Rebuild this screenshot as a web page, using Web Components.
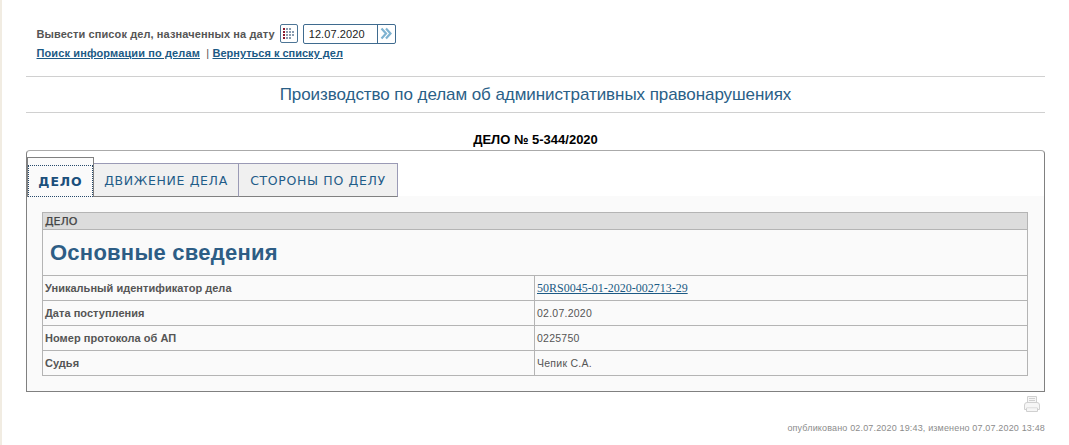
<!DOCTYPE html>
<html lang="ru">
<head>
<meta charset="utf-8">
<title>Дело</title>
<style>
  body { margin: 0; background: #fff; font-family: "Liberation Sans", Arial, sans-serif; }
</style>
</head>
<body>
<case-page></case-page>

<script>
// Строка выбора даты и ссылки над заголовком
class DateBar extends HTMLElement {
  constructor () {
    super()
    this.attachShadow({ mode: 'open' })
  }

  connectedCallback () {
    this.shadowRoot.innerHTML = /* HTML */`
      <style>
        :host { display: block; padding: 24px 0 0 10.5px; font-size: 11px; color: #555; }
        .row { display: flex; align-items: center; height: 19px; }
        .label { font-weight: bold; letter-spacing: .1px; }
        .cal { width: 16px; height: 17px; margin-left: 5px; border: 1px solid #4d7596; border-radius: 2px; display: flex; align-items: center; justify-content: center; }
        .input { display: flex; margin-left: 5px; width: 91px; height: 18px; border: 1px solid #3f6b8f; border-radius: 2px; box-sizing: content-box; }
        .value { flex: 1; padding-left: 5px; color: #222; line-height: 18px; font-size: 11px; letter-spacing: .1px; }
        .go { width: 17px; border-left: 1px solid #3f6b8f; display: flex; align-items: center; justify-content: center; }
        .links { margin-top: 3px; font-weight: bold; line-height: 14px; letter-spacing: .12px; }
        a { color: #1c5a85; text-decoration: underline; }
        .sep { color: #555; font-weight: normal; }
        .back { letter-spacing: 0; }
      </style>
      <div class="row">
        <span class="label">Вывести список дел, назначенных на дату</span>
        <span class="cal">
          <svg width="13" height="14" viewBox="0 0 13 14">
            <g fill="#8a1c30"><rect x="1" y="1" width="2" height="2"/><rect x="1" y="4" width="2" height="2"/><rect x="1" y="7" width="2" height="2"/><rect x="1" y="10" width="2" height="2"/></g>
            <g fill="#8a9cb0"><rect x="4" y="1" width="2" height="2"/><rect x="7" y="1" width="2" height="2"/><rect x="4" y="4" width="2" height="2"/><rect x="7" y="4" width="2" height="2"/><rect x="10" y="4" width="2" height="2"/><rect x="4" y="7" width="2" height="2"/><rect x="7" y="7" width="2" height="2"/><rect x="10" y="7" width="2" height="2"/><rect x="4" y="10" width="2" height="2"/><rect x="7" y="10" width="2" height="2"/></g>
          </svg>
        </span>
        <span class="input">
          <span class="value">12.07.2020</span>
          <span class="go">
            <svg width="12" height="13" viewBox="0 0 12 13" fill="none" stroke="#7fb3d1" stroke-width="2.200">
              <path d="M1.500 1.500 6 6.500l-4.500 5M6 1.500 10.500 6.500 6 11.500"/>
            </svg>
          </span>
        </span>
      </div>
      <div class="links"><a href="#">Поиск информации по делам</a> <span class="sep">&nbsp;|</span> <a class="back" href="#">Вернуться к списку дел</a></div>
    `
  }
}

customElements.define('date-bar', DateBar)

// Вкладки дела
class CaseTabs extends HTMLElement {
  constructor () {
    super()
    this.attachShadow({ mode: 'open' })
  }

  connectedCallback () {
    this.shadowRoot.innerHTML = /* HTML */`
      <style>
        :host { display: flex; align-items: flex-end; height: 40px; font-family: "DejaVu Sans", sans-serif; font-size: 12.5px; letter-spacing: .65px; color: #1f5c88; }
        div { box-sizing: border-box; height: 34px; line-height: 33px; background: #f0f0f0; border: 1px solid #9a9ab5; border-left: 0; border-bottom-color: #808080; text-align: center; }
        .on { position: relative; width: 67px; height: 40px; line-height: 48px; background: #fafafa; font-weight: bold; color: #1b4f7c; border: 1px solid #808080; border-bottom: 0; letter-spacing: .9px; }
        .on::after { content: ''; position: absolute; left: 0; right: 0; top: 7px; bottom: 0; border: 1px dotted #26496b; }
        .b { width: 145px; }
        .c { width: 159px; }
      </style>
      <div class="on">ДЕЛО</div>
      <div class="b">ДВИЖЕНИЕ ДЕЛА</div>
      <div class="c">СТОРОНЫ ПО ДЕЛУ</div>
    `
  }
}

customElements.define('case-tabs', CaseTabs)

// Таблица со сведениями
class CaseTable extends HTMLElement {
  constructor () {
    super()
    this.attachShadow({ mode: 'open' })
  }

  connectedCallback () {
    const rows = [
      ['Уникальный идентификатор дела', '<a href="#">50RS0045-01-2020-002713-29</a>'],
      ['Дата поступления', '02.07.2020'],
      ['Номер протокола об АП', '0225750'],
      ['Судья', 'Чепик С.А.']
    ]
    this.shadowRoot.innerHTML = /* HTML */`
      <style>
        :host { display: block; font-size: 11px; color: #555; }
        .box { border: 1px solid #b4b4b4; border-top: 0; }
        .head { height: 18px; box-sizing: border-box; border-top: 1px solid #b4b4b4; border-bottom: 1px solid #b4b4b4; background: #dcdcdc; padding-left: 2px; line-height: 17px; font-family: "DejaVu Sans", sans-serif; font-size: 11px; color: #444; -webkit-text-stroke: .25px #444; }
        h2 { margin: 0; height: 45px; box-sizing: border-box; padding-left: 7px; line-height: 45px; font-size: 22px; letter-spacing: .25px; color: #2d5d85; font-weight: bold; }
        .row { display: grid; grid-template-columns: 491px 1fr; height: 25px; box-sizing: border-box; border-top: 1px solid #b4b4b4; line-height: 25px; }
        .row > div:first-child { font-weight: bold; padding-left: 2px; letter-spacing: .03px; }
        .row > div:last-child { border-left: 1px solid #b4b4b4; padding-left: 2px; font-size: 10.5px; letter-spacing: .25px; line-height: 24px; }
        a { font-family: "Liberation Serif", serif; font-size: 12px; color: #1c5a85; letter-spacing: 0; }
      </style>
      <div class="box">
        <div class="head">ДЕЛО</div>
        <h2>Основные сведения</h2>
        ${rows.map(r => `<div class="row"><div>${r[0]}</div><div>${r[1]}</div></div>`).join('')}
      </div>
    `
  }
}

customElements.define('case-table', CaseTable)

// Страница целиком
class CasePage extends HTMLElement {
  constructor () {
    super()
    this.attachShadow({ mode: 'open' })
  }

  connectedCallback () {
    this.shadowRoot.innerHTML = /* HTML */`
      <style>
        :host { display: block; height: 445px; box-sizing: border-box; border-left: 2px solid #f1ece2; overflow: hidden; }
        .wrap { width: 1019px; margin-left: 24px; }
        .title { margin-top: 16px; height: 37px; box-sizing: border-box; border-top: 1px solid #d0d0d0; border-bottom: 1px solid #d0d0d0; text-align: center; font-size: 17px; line-height: 35px; color: #2a6087; letter-spacing: -.07px; }
        .num { text-align: center; font-size: 13px; font-weight: bold; color: #000; height: 37px; line-height: 14px; padding-top: 20px; box-sizing: border-box; }
        .panel { height: 242px; box-sizing: border-box; border: 1px solid #808080; border-top-color: #aaa; border-radius: 4px 4px 0 0; background: linear-gradient(#fff 45px, #fafafa 45px); padding-top: 6px; }
        case-table { margin: 15px 16px 0 15px; }
        .print { display: flex; justify-content: flex-end; padding: 5px 5px 0 0; height: 16px; margin-top: -1px; }
        .foot { text-align: right; font-size: 9px; letter-spacing: .16px; color: #8c8c8c; line-height: 12px; margin-top: 10px; }
      </style>
      <div class="wrap">
        <date-bar></date-bar>
        <div class="title">Производство по делам об административных правонарушениях</div>
        <div class="num">ДЕЛО № 5-344/2020</div>
        <div class="panel">
          <case-tabs></case-tabs>
          <case-table></case-table>
        </div>
        <div class="print">
          <svg width="16" height="16" viewBox="0 0 16 16" fill="#f6f6f6" stroke="#d0d0d0">
            <path d="M3.500 6.500v-6h9v6"/>
            <path d="M5 2.500h6M5 4.500h6" fill="none"/>
            <path d="M.5 9q0-2.500 2.500-2.500h10q2.500 0 2.500 2.500v4.500h-2V12h-11v1.500h-2z"/>
            <path d="M2.500 12.500v3h11v-3" />
          </svg>
        </div>
        <div class="foot">опубликовано 02.07.2020 19:43, изменено 07.07.2020 13:48</div>
      </div>
    `
  }
}

customElements.define('case-page', CasePage)
</script>
</body>
</html>
